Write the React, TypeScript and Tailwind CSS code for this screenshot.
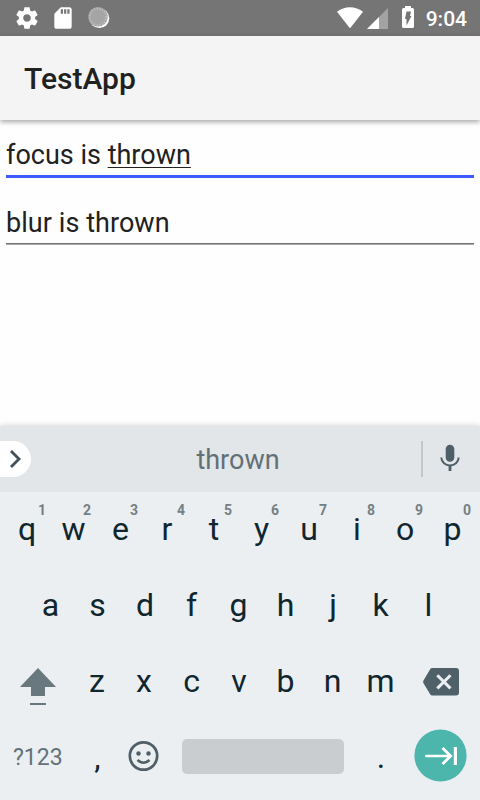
type KeySpec = { label: string; width: string; hint?: string };

const topRow: KeySpec[] = [
  { label: 'q', width: 'w-[46px]', hint: '1' },
  { label: 'w', width: 'w-[47px]', hint: '2' },
  { label: 'e', width: 'w-[47px]', hint: '3' },
  { label: 'r', width: 'w-[46px]', hint: '4' },
  { label: 't', width: 'w-[48px]', hint: '5' },
  { label: 'y', width: 'w-[47px]', hint: '6' },
  { label: 'u', width: 'w-[48px]', hint: '7' },
  { label: 'i', width: 'w-[48px]', hint: '8' },
  { label: 'o', width: 'w-[48px]', hint: '9' },
  { label: 'p', width: 'w-[47px]', hint: '0' },
];

const homeRow: KeySpec[] = [
  { label: 'a', width: 'w-[47px]' },
  { label: 's', width: 'w-[47px]' },
  { label: 'd', width: 'w-[48px]' },
  { label: 'f', width: 'w-[45px]' },
  { label: 'g', width: 'w-[49px]' },
  { label: 'h', width: 'w-[45px]' },
  { label: 'j', width: 'w-[50px]' },
  { label: 'k', width: 'w-[45px]' },
  { label: 'l', width: 'w-[51px]' },
];

const bottomRow: KeySpec[] = [
  { label: 'z', width: 'w-[47px]' },
  { label: 'x', width: 'w-[47px]' },
  { label: 'c', width: 'w-[48px]' },
  { label: 'v', width: 'w-[47px]' },
  { label: 'b', width: 'w-[46px]' },
  { label: 'n', width: 'w-[48px]' },
  { label: 'm', width: 'w-[48px]' },
];

function Key({ label, width, hint }: KeySpec) {
  return (
    <div className={`relative shrink-0 text-center text-[32px] leading-[74px] text-[#10262f] ${width}`}>
      {label}
      {hint && (
        <span
          className={`absolute top-[10px] text-[14px] leading-4 font-bold text-[#758084] ${
            hint === '1' ? 'right-1' : hint === '4' || hint === '0' ? 'right-[5px]' : 'right-1.5'
          }`}
        >
          {hint}
        </span>
      )}
    </div>
  );
}

function StatusBar() {
  return (
    <div className="flex h-9 items-center bg-[#757575] text-white">
      <svg className="ml-[14px] h-[26px] w-[26px]" viewBox="0 0 24 24" fill="currentColor">
        <path d="M19.43 12.98c.04-.32.07-.64.07-.98s-.03-.66-.07-.98l2.11-1.65c.19-.15.24-.42.12-.64l-2-3.46c-.12-.22-.39-.3-.61-.22l-2.49 1c-.52-.4-1.08-.73-1.69-.98l-.38-2.65C14.46 2.18 14.25 2 14 2h-4c-.25 0-.46.18-.49.42l-.38 2.65c-.61.25-1.17.59-1.69.98l-2.49-1c-.23-.09-.49 0-.61.22l-2 3.46c-.13.22-.07.49.12.64l2.11 1.65c-.04.32-.07.65-.07.98s.03.66.07.98l-2.11 1.65c-.19.15-.24.42-.12.64l2 3.46c.12.22.39.3.61.22l2.49-1c.52.4 1.08.73 1.69.98l.38 2.65c.03.24.24.42.49.42h4c.25 0 .46-.18.49-.42l.38-2.65c.61-.25 1.17-.59 1.69-.98l2.49 1c.23.09.49 0 .61-.22l2-3.46c.12-.22.07-.49-.12-.64l-2.11-1.65zM12 15.5c-1.93 0-3.5-1.57-3.5-3.5s1.57-3.5 3.5-3.5 3.5 1.57 3.5 3.5-1.57 3.5-3.5 3.5z" />
      </svg>
      <svg className="ml-[10px] h-[26px] w-[26px]" viewBox="0 0 24 24" fill="currentColor">
        <path d="M18 2h-8L4.02 8 4 20c0 1.1.9 2 2 2h12c1.1 0 2-.9 2-2V4c0-1.1-.9-2-2-2zm-6 6h-2V4h2v4zm3 0h-2V4h2v4zm3 0h-2V4h2v4z" />
      </svg>
      <svg className="ml-[11px] h-6 w-6" viewBox="0 0 24 24">
        <circle cx="12.4" cy="12.2" r="9.9" fill="#fff" />
        <circle cx="11" cy="10.8" r="9.8" fill="#a5a5a5" />
        <circle cx="11" cy="10.8" r="8.2" fill="none" stroke="#c4c4c4" strokeWidth="1.8" strokeDasharray="1 1.65" />
      </svg>
      <svg className="ml-auto h-[22px] w-[26px]" viewBox="0 0 26 22" fill="currentColor">
        <path d="M0 4.7C3.8 1.8 8.2.2 13 .2S22.2 1.8 26 4.7L13.7 20.6Q13 21.3 12.3 20.6Z" />
      </svg>
      <svg className="ml-1 h-[22px] w-[21px]" viewBox="0 0 21 22">
        <path d="M21 1v21H0Z" fill="#a3a3a3" />
        <path d="M12 10v12H0Z" fill="#fff" />
      </svg>
      <svg className="mb-[2px] ml-[14px] h-[22px] w-3" viewBox="0 0 12 22">
        <path d="M3 0h6v2h1.5Q12 2 12 3.5V20.5Q12 22 10.5 22h-9Q0 22 0 20.5V3.5Q0 2 1.5 2H3Z" fill="#fff" />
        <path d="M4.5 5.5h4.5L8 10H9.5L4.5 19.5V13H3Z" fill="#757575" />
      </svg>
      <span className="mr-[13px] ml-3 pt-px text-[21px] leading-6 font-medium">9:04</span>
    </div>
  );
}

function SuggestionStrip() {
  return (
    <div className="flex h-[66px] items-center bg-[#e2e6e9]">
      <div className="flex h-9 w-[31px] items-center rounded-r-full bg-white">
        <svg className="mb-px ml-[9px] h-5 w-3" viewBox="0 0 12 20" fill="none" stroke="#414f58" strokeWidth="2.8">
          <path d="M2 2l8 8-8 8" />
        </svg>
      </div>
      <div className="ml-[55px] w-[304px] pt-[2px] text-center text-[27px] leading-[64px] text-[#637076]">thrown</div>
      <div className="ml-[31px] h-9 w-[2px] bg-[#c2c7c9]" />
      <svg className="mb-[2px] ml-[17px] h-7 w-5" viewBox="0 0 20 28">
        <rect x="5.7" y="0.8" width="8.6" height="17" rx="4.3" fill="#4e5f67" />
        <path d="M1.3 13.5c.3 4.8 4 8 8.7 8s8.4-3.2 8.7-8" fill="none" stroke="#4e5f67" strokeWidth="2" />
        <path d="M10 21.5V27" stroke="#4e5f67" strokeWidth="2.8" />
      </svg>
    </div>
  );
}

function Keyboard() {
  return (
    <div className="h-[308px] bg-[#ebeff2]">
      <div className="flex h-[76px] pl-1">
        {topRow.map((k) => (
          <Key key={k.label} {...k} />
        ))}
      </div>
      <div className="flex h-[76px] pl-[27px]">
        {homeRow.map((k) => (
          <Key key={k.label} {...k} />
        ))}
      </div>
      <div className="flex h-[76px]">
        <div className="flex w-[73.5px] justify-center">
          <svg className="mt-[23px] ml-[3px] h-10 w-9" viewBox="0 0 36 40" fill="#69777e">
            <path d="M18 1L36 20H25v9H11v-9H0Z" />
            <path d="M10 36h16v2H10Z" />
          </svg>
        </div>
        {bottomRow.map((k) => (
          <Key key={k.label} {...k} />
        ))}
        <svg className="mt-[24px] ml-[18.5px] h-7 w-9" viewBox="0 0 36 28">
          <path
            d="M9 0h24q3 0 3 3v21.5q0 3-3 3H9Q8 27.5 7.3 26.5L.5 15.2q-.8-1.4 0-2.7L7.3 1Q8 0 9 0Z"
            fill="#4f6069"
          />
          <path d="M14.3 7.2l13.2 13.2M27.5 7.2L14.3 20.4" stroke="#ebeff2" strokeWidth="3" />
        </svg>
      </div>
      <div className="flex h-20 items-start">
        <div className="ml-[13px] w-[61px] text-[23px] leading-[76px] text-[#637278]">?123</div>
        <Key label="," width="w-[47px]" />
        <svg className="mt-[20px] ml-[7px] h-[32px] w-[31px]" viewBox="0 0 31 32" fill="none" stroke="#4e5f67">
          <circle cx="15.5" cy="16" r="13.7" strokeWidth="2.7" />
          <path d="M9.5 20q6 5.600 12 0" strokeWidth="2.5" />
          <circle cx="10.5" cy="13.5" r="2.2" fill="#4e5f67" stroke="none" />
          <circle cx="20.5" cy="13.5" r="2.2" fill="#4e5f67" stroke="none" />
        </svg>
        <div className="mt-[19px] ml-[23px] h-[35px] w-[162px] rounded-[5px] bg-[#c9cdd0]" />
        <div className="ml-[13.5px]">
          <Key label="." width="w-[47px]" />
        </div>
        <svg className="mt-[9px] ml-[9.5px] h-[53px] w-[53px]" viewBox="0 0 53 53" fill="none" stroke="#fff">
          <circle cx="26.5" cy="26.5" r="26.1" fill="#4db6ac" stroke="none" />
          <path d="M11.2 27h26M28.5 19l8.2 8-8.2 8" strokeWidth="2.7" />
          <path d="M41.4 18v18" strokeWidth="3.2" />
        </svg>
      </div>
    </div>
  );
}

export default function App() {
  return (
    <div className="flex h-[800px] w-[480px] flex-col overflow-hidden bg-[#fefefe] font-['Roboto',sans-serif]">
      <StatusBar />
      <header className="h-[84px] bg-[#f4f4f4] px-6 text-[30px] leading-[85px] font-medium text-[#212121] shadow-[0_2px_5px_rgba(0,0,0,0.35)]">
        TestApp
      </header>
      <main className="flex-1 pt-[15px] text-[27px] leading-[40px] text-[#212121]">
        <div className="mx-1.5 h-[43px] border-b-[3px] border-[#3d5afe]">
          focus is{' '}
          <span className="underline decoration-1 underline-offset-[3px] [text-decoration-skip-ink:none]">thrown</span>
        </div>
        <div className="mx-1.5 mt-[25px] h-[41px] border-b border-[#757575] tracking-[0.06px] shadow-[0_1px_0_#a8a8a8]">
          blur is thrown
        </div>
      </main>
      <div className="shadow-[0_-1px_5px_rgba(0,0,0,0.15)]">
        <SuggestionStrip />
        <Keyboard />
      </div>
    </div>
  );
}
